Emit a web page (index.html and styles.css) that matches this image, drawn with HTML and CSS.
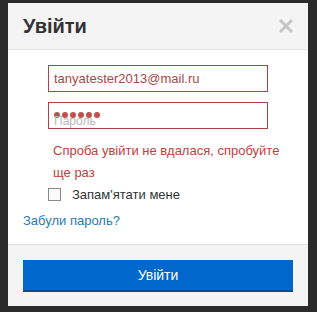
FILE: index.html
```html
<!DOCTYPE html>
<html>
<head>
<meta charset="utf-8">
<link rel="stylesheet" href="styles.css">
</head>
<body>
<div class="page">
  <div class="modal">
    <div class="modal-header">
      <h1 class="title">Увійти</h1>
      <svg class="close" width="14" height="14" viewBox="0 0 14 14"><path d="M2 2 L12 12 M12 2 L2 12" stroke="#c6c6c6" stroke-width="3" stroke-linecap="square"/></svg>
    </div>
    <div class="modal-body">
      <div class="field">tanyatester2013@mail.ru</div>
      <div class="field field-pass">
        <span class="dots"><i></i><i></i><i></i><i></i><i></i><i></i></span>
        <span class="placeholder">Пароль</span>
      </div>
      <p class="error">Спроба увійти не вдалася, спробуйте ще раз</p>
      <label class="remember"><span class="checkbox"></span><span>Запам'ятати мене</span></label>
      <a class="forgot">Забули пароль?</a>
    </div>
    <div class="modal-footer">
      <button class="submit">Увійти</button>
    </div>
  </div>
</div>
</body>
</html>
```
FILE: styles.css
```css
html, body {
  margin: 0;
  padding: 0;
}
body {
  background: #2b2b2b;
  width: 317px;
  height: 312px;
  overflow: hidden;
  font-family: "Liberation Sans", Arial, sans-serif;
}
.page {
  padding: 3px 0 0 8px;
}
.modal {
  width: 300px;
  height: 303px;
  background: #fff;
  display: flex;
  flex-direction: column;
  box-sizing: border-box;
}
.modal-header {
  height: 47px;
  box-sizing: border-box;
  background: #f4f4f4;
  border-bottom: 1px solid #e4e4e4;
  display: flex;
  align-items: center;
  justify-content: space-between;
  padding: 0 15px;
}
.title {
  margin: 0;
  font-size: 20px;
  font-weight: bold;
  color: #333;
}
.close {
  display: block;
}
.modal-body {
  height: 194px;
  box-sizing: border-box;
  padding: 15px 40px 0 40px;
  display: flex;
  flex-direction: column;
}
.field {
  height: 27px;
  width: 220px;
  box-sizing: border-box;
  border: 1px solid #a94442;
  padding: 0 5px;
  display: flex;
  align-items: center;
  font-size: 13px;
  color: #a94848;
  position: relative;
}
.field-pass {
  margin-top: 10px;
}
.dots {
  display: flex;
  gap: 2px;
  position: relative;
  top: -1px;
}
.dots i {
  width: 6px;
  height: 6px;
  border-radius: 50%;
  background: #c0504d;
}
.placeholder {
  position: absolute;
  left: 5px;
  top: 11px;
  font-size: 12px;
  color: #b8b8b8;
}
.error {
  margin: 11px -30px 0 0;
  padding: 0 5px;
  font-size: 13px;
  line-height: 22px;
  color: #bd3f3c;
}
.remember {
  display: flex;
  align-items: center;
  margin-top: 3px;
  font-size: 13px;
  color: #333;
}
.checkbox {
  width: 11px;
  height: 11px;
  border: 1px solid #8a8a8a;
  background: #fafafa;
  margin-right: 11px;
}
.forgot {
  margin: 11px 0 0 -25px;
  font-size: 13px;
  color: #2a7ab5;
}
.modal-footer {
  flex: 1;
  background: #f4f4f4;
  border-top: 1px solid #e0e0e0;
  padding: 15px 15px 0 15px;
}
.submit {
  display: block;
  width: 270px;
  height: 32px;
  border: 0;
  border-bottom: 2px solid #0a4c9a;
  background: #0068cc;
  color: #fff;
  font-family: "Liberation Sans", Arial, sans-serif;
  font-size: 14px;
  padding: 0;
}
```
